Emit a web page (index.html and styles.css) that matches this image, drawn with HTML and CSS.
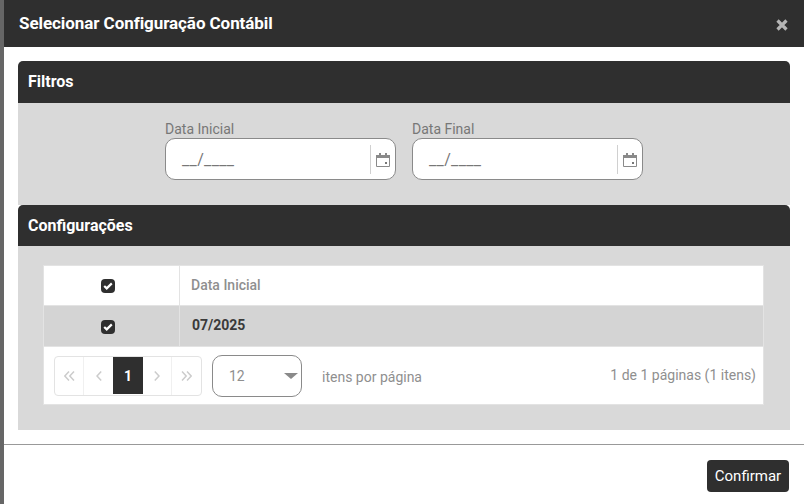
FILE: index.html

```html
<!DOCTYPE html>
<html lang="pt-BR">
<head>
  <meta charset="UTF-8" />
  <title>Selecionar Configuração Contábil</title>
  <link rel="stylesheet" href="styles.css">
</head>
<body>

<div class="dialog">
  <div class="dialog-header">
    <h1>Selecionar Configuração Contábil</h1>
    <svg class="close" width="12" height="12" viewBox="0 0 12 12"><path d="M1.5 1.5l9 9M10.5 1.5l-9 9" stroke="#b5b5b5" stroke-width="3.2" fill="none"/></svg>
  </div>

  <div class="dialog-body">
    <div class="panel-title">Filtros</div>
    <div class="filters">
      <div class="field">
        <label>Data Inicial</label>
        <div class="date-input">
          <span class="mask">__/____</span>
          <span class="date-btn">
            <svg width="14" height="14" viewBox="0 0 14 14"><path d="M.5 2.5h13v11H.5z" fill="#fff" stroke="#8a8a8a"/><path d="M0 2h14v3H0z" fill="#8a8a8a"/><path d="M3 0h2v3H3zM9 0h2v3H9z" fill="#8a8a8a"/><path d="M9 9h2v2H9z" fill="#777"/></svg>
          </span>
        </div>
      </div>
      <div class="field">
        <label>Data Final</label>
        <div class="date-input">
          <span class="mask">__/____</span>
          <span class="date-btn">
            <svg width="14" height="14" viewBox="0 0 14 14"><path d="M.5 2.5h13v11H.5z" fill="#fff" stroke="#8a8a8a"/><path d="M0 2h14v3H0z" fill="#8a8a8a"/><path d="M3 0h2v3H3zM9 0h2v3H9z" fill="#8a8a8a"/><path d="M9 9h2v2H9z" fill="#777"/></svg>
          </span>
        </div>
      </div>
    </div>

    <div class="panel-title second">Configurações</div>
    <div class="config">
      <div class="grid">
        <div class="grid-row head">
          <div class="cell-check"><span class="check"><svg width="10" height="8" viewBox="0 0 10 8"><path d="M1.2 4l2.5 2.4L8.8 1.4" stroke="#fff" stroke-width="2.2" fill="none"/></svg></span></div>
          <div class="cell-text">Data Inicial</div>
        </div>
        <div class="grid-row selected">
          <div class="cell-check"><span class="check"><svg width="10" height="8" viewBox="0 0 10 8"><path d="M1.2 4l2.5 2.4L8.8 1.4" stroke="#fff" stroke-width="2.2" fill="none"/></svg></span></div>
          <div class="cell-text">07/2025</div>
        </div>
        <div class="pager">
          <div class="pages">
            <span class="page-btn"><svg width="11" height="10" viewBox="0 0 11 10"><path d="M5 .5L.8 5 5 9.5M10 .5L5.8 5 10 9.5" stroke="#ccc" stroke-width="1.5" fill="none"/></svg></span>
            <span class="page-btn"><svg width="6" height="10" viewBox="0 0 6 10"><path d="M5.2.5L1 5l4.2 4.5" stroke="#ccc" stroke-width="1.5" fill="none"/></svg></span>
            <span class="page-btn active">1</span>
            <span class="page-btn"><svg width="6" height="10" viewBox="0 0 6 10"><path d="M.8.5L5 5 .8 9.5" stroke="#ccc" stroke-width="1.5" fill="none"/></svg></span>
            <span class="page-btn"><svg width="11" height="10" viewBox="0 0 11 10"><path d="M1 .5L5.2 5 1 9.5M6 .5L10.2 5 6 9.5" stroke="#ccc" stroke-width="1.5" fill="none"/></svg></span>
          </div>
          <div class="page-size">
            <span>12</span>
            <i class="caret"></i>
          </div>
          <span class="per-page">itens por página</span>
          <span class="page-info">1 de 1 páginas (1 itens)</span>
        </div>
      </div>
    </div>
  </div>

  <div class="dialog-footer">
    <button>Confirmar</button>
  </div>
</div>

</body>
</html>
```

FILE: styles.css

```css
html, body { margin: 0; padding: 0; height: 100%; overflow: hidden; }
body { background: #666; font-family: Roboto, sans-serif; padding-left: 4px; box-sizing: border-box; }

.dialog { background: #fff; height: 504px; display: flex; flex-direction: column; }
.dialog-header { height: 47px; background: #2f2f2f; display: flex; align-items: center; justify-content: space-between; padding: 0 16px 0 15px; flex: none; }
.dialog-header h1 { margin: 0; font-size: 17px; font-weight: 700; letter-spacing: -0.07px; color: #fff; position: relative; top: -0.5px; }
.close { margin-top: 2px; }

.dialog-body { padding: 14px; flex: none; }
.panel-title { height: 42px; line-height: 41px; background: #2f2f2f; color: #fff; font-size: 16px; font-weight: 700; padding-left: 10px; border-radius: 5px 5px 0 0; }
.panel-title.second { height: 41px; }

.filters { height: 102px; background: #d9d9d9; display: flex; gap: 16px; padding-left: 147px; padding-top: 18px; box-sizing: border-box; }
.field label { display: block; font-size: 14px; line-height: 17px; color: #777; }
.date-input { width: 231px; height: 42px; box-sizing: border-box; background: #fff; border: 1px solid #8a8a8a; border-radius: 10px; display: flex; align-items: center; justify-content: space-between; }
.mask { font-size: 16px; color: #777; margin-left: 16px; letter-spacing: 0.35px; }
.date-btn { height: 29px; width: 25px; border-left: 1px solid #d0d0d0; display: flex; align-items: center; justify-content: center; box-sizing: border-box; padding-top: 1px; }

.config { background: #d9d9d9; height: 184px; padding: 19px 26px 0 25px; box-sizing: border-box; }
.grid { background: #fff; border: 1px solid #e3e3e3; height: 140px; box-sizing: border-box; display: flex; flex-direction: column; }
.grid-row { display: flex; height: 41px; box-sizing: border-box; border-bottom: 1px solid #e3e3e3; flex: none; }
.grid-row.head { height: 40px; }
.grid-row.selected { background: #d4d4d4; }
.cell-check { width: 136px; padding-right: 8px; box-sizing: border-box; border-right: 1px solid #e3e3e3; display: flex; align-items: center; justify-content: center; flex: none; }
.check { width: 14px; height: 14px; background: #2f2f2f; border-radius: 4px; display: flex; align-items: center; justify-content: center; }
.selected .check { margin-top: 1px; }
.cell-text { font-size: 14px; font-weight: 500; padding-left: 11px; line-height: 39px; color: #8f8f8f; }
.selected .cell-text { color: #3a3a3a; font-weight: 700; padding-left: 12px; line-height: 39px; }

.pager { display: flex; align-items: center; flex: 1; padding: 0 7px 0 10px; font-size: 14px; color: #8f8f8f; }
.pages { display: flex; height: 40px; width: 148px; box-sizing: border-box; border: 1px solid #e3e3e3; border-radius: 4px; align-items: center; }
.page-btn { width: 29.5px; height: 38px; display: flex; align-items: center; justify-content: center; border-right: 1px solid #f0f0f0; box-sizing: border-box; }
.page-btn:nth-child(2), .page-btn:nth-child(3), .page-btn:last-child { border-right: none; }
.page-btn.active { background: #2f2f2f; color: #fff; font-weight: 700; height: 37px; width: 30px; }
.page-size { width: 90px; height: 42px; box-sizing: border-box; border: 1px solid #8a8a8a; border-radius: 10px; margin-left: 10px; display: flex; align-items: center; justify-content: space-between; padding: 0 3px 0 16px; }
.caret { border: 7px solid transparent; border-top: 6px solid #8a8a8a; border-bottom: none; }
.per-page { margin-left: 20px; position: relative; top: 1px; }
.page-info { margin-left: auto; position: relative; top: -1px; }

.dialog-footer { border-top: 1px solid #999; flex: 1; display: flex; justify-content: flex-end; align-items: flex-start; padding: 15px 15px 0 0; }
button { font-family: Roboto, sans-serif; font-size: 15px; height: 32px; width: 82px; padding: 0; border: none; border-radius: 4px; background: #2f2f2f; color: #fff; cursor: pointer; }
```
